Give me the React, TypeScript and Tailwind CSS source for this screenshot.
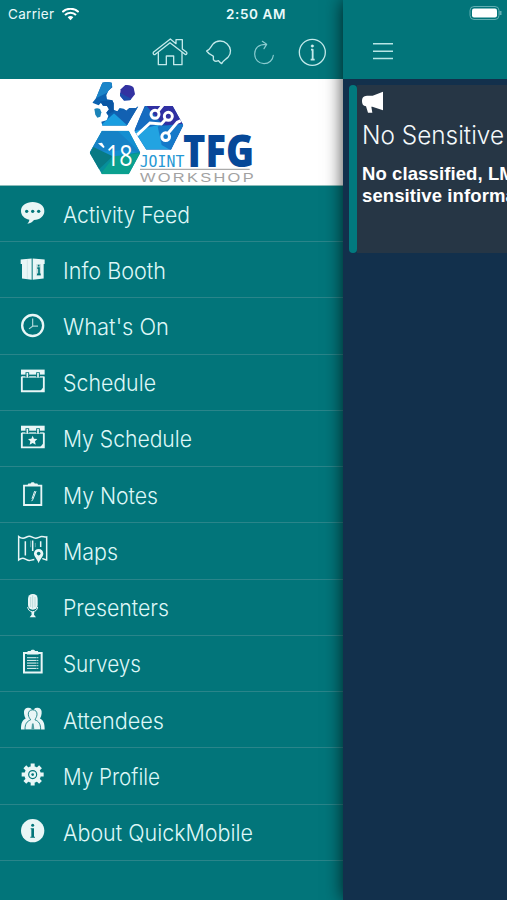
import type { ReactNode } from "react";

type MenuItem = { label: string; width: number; top: number; icon: ReactNode };

const INK = "#e9f6f6";
const TEAL = "#02757a";

const Calendar = ({ y }: { y: number }) => (
  <>
    <path d={`M63 ${y}h71v15h-71z`} fill={INK} />
    <path d={`M65.500 ${y + 21}V${y + 65}H131.500V${y + 21}`} fill="none" stroke={INK} strokeWidth="5.500" />
    <path d={`M66 ${y + 22}h65`} stroke={INK} strokeWidth="4" />
    <path d={`M82 ${y + 8}v15M114 ${y + 8}v15`} stroke={TEAL} strokeWidth="11" />
    <path d={`M82 ${y + 10}v14M114 ${y + 10}v14`} stroke={INK} strokeWidth="5" />
    <path d={`M130 ${y + 53}l-9 11h9z`} fill={INK} />
  </>
);

const items: MenuItem[] = [
  {
    label: "Activity Feed", width: 127, top: 3,
    icon: (
      <>
        <path d="M98 51c20 0 35 11 35 27s-13 26-31 27c-4 6-11 10-20 11 4-4 6-8 6-12-15-3-25-13-25-26 0-16 15-27 35-27z" fill={INK} />
        <g fill={TEAL}><circle cx="80" cy="79" r="5" /><circle cx="98" cy="79" r="5" /><circle cx="116" cy="79" r="5" /></g>
      </>
    ),
  },
  {
    label: "Info Booth", width: 103, top: 171.7,
    icon: (
      <>
        <path d="M62 224l33-3v64l-29-4v-43h-4zM98 221l36 3v14h-3v43l-33 4z" fill={INK} />
        <path d="M82 224v58" stroke="#b9d5d6" strokeWidth="1.500" />
        <path d="M109 238h14v36h-14z" fill="#c5dddd" />
        <path d="M116 240v5M112 250h5v19M111 269h11" stroke={TEAL} strokeWidth="5" fill="none" />
      </>
    ),
  },
  {
    label: "What's On", width: 106, top: 340.4,
    icon: (
      <>
        <circle cx="98" cy="423" r="31.500" fill="none" stroke={INK} strokeWidth="7" />
        <path d="M98 402v23h16M98 425l-11 8" fill="none" stroke="#add7d8" strokeWidth="3.500" />
      </>
    ),
  },
  { label: "Schedule", width: 93, top: -0.8, icon: <Calendar y={46} /> },
  {
    label: "My Schedule", width: 129, top: 167.9,
    icon: (
      <>
        <Calendar y={215} />
        <path d="M98 245l4 9 10 1-7 7 2 10-9-5-9 5 2-10-7-7 10-1z" fill={INK} />
      </>
    ),
  },
  {
    label: "My Notes", width: 95, top: 336.6,
    icon: (
      <>
        <path d="M72 392.500h52v58H72z" fill="none" stroke={INK} strokeWidth="5.500" />
        <path d="M82 392l3-6h7c0-5 12-5 12 0h8l3 6z" fill={INK} />
        <path d="M108 409l-9 24-4 6M104 409l-8 23" stroke={INK} strokeWidth="3" fill="none" />
      </>
    ),
  },
  {
    label: "Maps", width: 55, top: -4.7,
    icon: (
      <>
        <path d="M103 105c-6 0-11 3-15 3-7 0-13-7-20-7-5 0-8 2-12 5V36c4 3 8 5 13 5 7 0 12-6 19-6s11 6 19 6c7 0 12-5 18-5 6 0 10 2 15 1v69c-4 0-9-4-13-3" fill="none" stroke={INK} strokeWidth="4.500" />
        <path d="M76 50v43M98 48v31M122 50v17" stroke={INK} strokeWidth="4.500" />
        <path d="M92 48v20M106 55v13" stroke="#8dc1c3" strokeWidth="2" />
        <path d="M116 73c-8 0-14 6-14 14 0 10 9 15 14 29 5-14 14-19 14-29 0-8-6-14-14-14z" fill={INK} />
        <circle cx="116" cy="87" r="5.500" fill={TEAL} />
      </>
    ),
  },
  {
    label: "Presenters", width: 106, top: 164,
    icon: (
      <>
        <rect x="84" y="209" width="29" height="47" rx="14" fill={INK} />
        <path d="M92 218v30M98 213v39M105 218v30" stroke="#9bc9ca" strokeWidth="1.800" />
        <path d="M83 248c1 9 7 14 15 14s14-5 15-14" fill="none" stroke={INK} strokeWidth="3" />
        <path d="M94 263h9l-1 8 6 8H89l6-8z" fill={INK} />
      </>
    ),
  },
  {
    label: "Surveys", width: 78, top: 332.8,
    icon: (
      <>
        <path d="M72 386.500h53v59H72z" fill="none" stroke={INK} strokeWidth="6" />
        <path d="M81 391l2-10h9c0-5 13-5 13 0h9l2 10z" fill={INK} />
        <path d="M81 401h34M81 409h34M81 417h34M81 425h34M81 433h34" stroke={INK} strokeWidth="3" />
        <path d="M110 397v40" stroke={TEAL} strokeWidth="1.500" />
      </>
    ),
  },
  {
    label: "Attendees", width: 101, top: 6.5,
    icon: (
      <>
        <path d="M83 54c10-1 15 5 14 15-1 7-3 11-6 15l8 5v30H63c0-20 4-27 14-33-3-5-4-9-5-16-1-9 3-15 11-16z" fill={INK} />
        <path d="M114 54c-10-1-15 5-14 15 1 7 3 11 6 15l-8 5v30h36c0-20-4-27-14-33 3-5 4-9 5-16 1-9-3-15-11-16z" fill={INK} />
        <path d="M98 60c9 0 14 6 13 15-1 7-4 10-6 15 12 5 17 12 17 30H75c0-18 5-25 17-30-3-5-6-8-7-15-1-9 4-15 13-15z" fill={INK} stroke={TEAL} strokeWidth="2.500" />
        <path d="M96 101h5l2 19h-9z" fill="#4e9ea1" />
      </>
    ),
  },
  {
    label: "My Profile", width: 97, top: 175.2,
    icon: (
      <>
        <g stroke={INK} strokeWidth="12">
          <path d="M98 222v66M65 255h66M74.500 231.500l47 47M121.500 231.500l-47 47" />
        </g>
        <circle cx="98" cy="255" r="25" fill={INK} />
        <circle cx="98" cy="255" r="12" fill="none" stroke={TEAL} strokeWidth="3.500" />
        <circle cx="98" cy="255" r="4" fill={TEAL} />
      </>
    ),
  },
  {
    label: "About QuickMobile", width: 190, top: 343.9,
    icon: (
      <>
        <circle cx="98" cy="424" r="35" fill={INK} />
        <circle cx="98" cy="408" r="4.500" fill={TEAL} />
        <path d="M92 417h10v25h3v3H91v-3h3v-22h-2z" fill={TEAL} />
      </>
    ),
  },
];

function Logo() {
  return (
    <svg width="185" height="107" viewBox="0 3 555 321" className="ml-20 block">
      <defs>
        <clipPath id="gear">
          <path d="M67 14q14-4 28 0l2 14-12 10-6 14 2 12 16 3 4 9v19l11 5 7-10 12 2 8 6 9-8h20l7-5-35 58H67l-3-12 16-4 5-13-6-10 8-10-6-10-12-1-6-9-7 8-19-8 11-13z" />
        </clipPath>
        <clipPath id="hexRight"><path d="M194 84H278L310 142 273 215H199L163 158z" /></clipPath>
        <clipPath id="hexLeft"><path d="M66 158H146L181 224 146 289H66L29 224z" /></clipPath>
      </defs>
      <g clipPath="url(#gear)">
        <path d="M30 8h150v140H30z" fill="#0b62b0" />
        <path d="M30 8h75L86 42 30 70z" fill="#1b85c9" />
        <path d="M60 70l42-4v34l-24 12z" fill="#0a56a4" />
        <path d="M58 146l46-42 70 44z" fill="#1a9ee0" />
        <path d="M100 104l82-24-36 66z" fill="#1261b2" />
      </g>
      <path d="M43 93q8-5 17 0l4 10-3 13-9 3-6-9z" fill="#1a83b8" />
      <path d="M122 34l14-13q17-2 25 8l4 20-14 17-19 1-12-14z" fill="#3332a1" />
      <path d="M120 44l34 18-4 5-18 1-12-15z" fill="#1c4cab" />
      <g clipPath="url(#hexRight)">
        <path d="M160 80h155v140H160z" fill="#1550ad" />
        <path d="M200 80h110v62l-40 8-65-45z" fill="#3030a2" />
        <path d="M160 150l38-68 48 55-40 70z" fill="#166cc0" />
        <path d="M160 160l75-20 40 75h-95z" fill="#22a3e1" />
        <path d="M233 145l80-8-40 80-28-16z" fill="#1579c9" />
        <g fill="none" stroke="white" strokeWidth="9">
          <path d="M160 181l50-46 34 3 13-14M233 101l16-20M263 167l29-34 30-14" />
          <circle cx="225" cy="109" r="12" /><circle cx="265" cy="115" r="12" /><circle cx="257" cy="176" r="11.500" />
        </g>
      </g>
      <g clipPath="url(#hexLeft)">
        <path d="M25 155h160v140H25z" fill="#078e9b" />
        <path d="M25 155h160v65L105 237 29 221z" fill="#148fd1" />
        <path d="M29 223l37-65 48 2 68 64-45-8z" fill="#1682c6" />
        <path d="M40 207l58 28-55 52-15-60z" fill="#087a84" />
        <path d="M60 290l43-55 80-9-33 70z" fill="#0ba08f" />
      </g>
      <path d="M54 196l12-2 8 13-4 3z" fill="white" />
      <g style={{ fontFamily: "'Open Sans', sans-serif" }}>
        <text x="78" y="264" fontSize="86" fill="white" textLength="80" lengthAdjust="spacingAndGlyphs">18</text>
        <text x="309" y="267" fontSize="131" fontWeight="800" fill="#064898" textLength="213" lengthAdjust="spacingAndGlyphs">TFG</text>
      </g>
      <text x="179" y="268" fontSize="49" fill="#2598d4" textLength="134" lengthAdjust="spacingAndGlyphs" style={{ fontFamily: "'DejaVu Sans Mono', monospace" }}>JOINT</text>
      <path d="M180 274h329" stroke="#aaa" strokeWidth="4" />
      <g transform="translate(180 311) scale(1.2 1)">
        <text x="0" y="0" fontSize="41" fill="#a2a2a2" textLength="284" style={{ fontFamily: "'Liberation Sans', sans-serif" }}>WORKSHOP</text>
      </g>
    </svg>
  );
}

function TopIcons() {
  return (
    <svg width="190" height="36" viewBox="30 108 570 108" className="absolute left-[150px] top-[36px]" fill="none" stroke="#c3e9ea" strokeWidth="4" strokeLinejoin="round" strokeLinecap="round">
      <path d="M91 117L40 157c-2 5 2 8 6 6l44-35 45 35c5 2 7-3 5-6l-13-10v-28h-19v12z" />
      <path d="M55 158v36h24v-26h22v26h25v-36" />
      <path d="M200 153c9-3 12-12 18-20 12-13 31-13 43-2 13 12 14 29 3 41-7 7-14 9-19 19-5-2-7-7-10-9-9 4-17 1-15-9 1-3-1-6-4-7-6-2-11-6-16-13z" />
      <path d="M400 166c-1 14-13 25-28 25-16 0-28-12-28-29 0-17 12-29 34-29M367 124l13 9-8 13" stroke="#8accd0" strokeWidth="3.500" />
      <circle cx="517" cy="157" r="39" />
      <path d="M513 149h5v30M512 179h12" strokeWidth="5.500" strokeLinecap="butt" />
      <circle cx="517" cy="138" r="4" fill="#d4f1f1" strokeWidth="1" />
    </svg>
  );
}

function MenuRow({ item }: { item: MenuItem }) {
  return (
    <li className="flex h-[56.24px] items-center border-b border-[#2a858a] pl-4">
      <svg width="33" height="56.240" viewBox={`48 ${item.top} 99 168.720`} className="shrink-0">{item.icon}</svg>
      <svg width="200" height="56.240" className="ml-[14px] shrink-0 overflow-visible">
        <text x="0" y="37" fill="#def7f7" fontSize="22.800" fontWeight="300" textLength={item.width} lengthAdjust="spacingAndGlyphs" style={{ fontFamily: "Inter, 'Liberation Sans', sans-serif" }}>{item.label}</text>
      </svg>
    </li>
  );
}

export default function App() {
  return (
    <div className="relative flex h-[900px] w-[507px] overflow-hidden bg-[#02757a] font-['Inter','Liberation_Sans',sans-serif]">
      <aside className="w-[343px] shrink-0">
        <header className="h-[79px]"><TopIcons /></header>
        <div className="h-[107px] border-b border-[#8cbdbb] bg-white"><Logo /></div>
        <ul>{items.map((item) => <MenuRow key={item.label} item={item} />)}</ul>
      </aside>

      <main className="relative flex w-[164px] shrink-0 flex-col bg-[#12304c] shadow-[0_0_17px_rgba(0,0,0,0.75)]">
        <header className="h-[79px] bg-[#02757a] pl-[30px] pt-[42px]">
          <svg width="20" height="19" viewBox="0 0 20 19" className="block">
            <path d="M0 1.800h20M0 9.200h20M0 16.500h20" stroke="#b8e5e5" strokeWidth="1.600" />
          </svg>
        </header>
        <section className="ml-[6px] mt-[6px] flex h-[168px]">
          <div className="w-[8px] shrink-0 rounded-sm bg-[#02797e]" />
          <div className="w-[150px] overflow-hidden whitespace-nowrap bg-[#263645] pl-[5px] pt-[6px] text-white">
            <svg width="22" height="22" viewBox="81 48 66 66" fill="white" className="block">
              <path d="M144 50v56l-32-11h-3l3 18H99l-6-19c-9-1-12-7-12-15 0-11 4-16 15-17h17z" />
            </svg>
            <h1 className="mt-[4px] font-['Inter']">
              <svg width="160" height="36" className="block overflow-visible">
                <text x="0" y="27" fill="#f4f9fb" fontSize="25.500" fontWeight="300" textLength="142" lengthAdjust="spacingAndGlyphs">No Sensitive</text>
              </svg>
            </h1>
            <p className="mt-[10px] font-['Liberation_Sans',sans-serif] text-[18.500px] font-bold leading-[22px] tracking-[0.100px]">No classified, LM<br />sensitive informa</p>
          </div>
        </section>
      </main>

      <div className="absolute inset-x-0 top-0 flex h-7 items-center text-[#eafafa]">
        <span className="ml-2 w-[54px] text-[13.500px] tracking-[0.300px]">Carrier</span>
        <svg width="17" height="13" viewBox="0 0 51 39" fill="none" stroke="white" strokeWidth="6">
          <path d="M1 12c14-13 35-13 49 0M9 21c9-9 24-9 33 0" />
          <path d="M17 28c5-5 12-5 17 0l-8.500 9z" fill="white" stroke="none" />
        </svg>
        <span className="ml-[147px] w-[70px] whitespace-nowrap text-[13.500px] font-semibold tracking-[0.600px]">2:50 AM</span>
        <svg width="33" height="16" viewBox="0 0 33 16" className="ml-auto mr-[5px] -mt-[2px]">
          <rect x="1" y="1.500" width="29" height="13" rx="4" fill="none" stroke="#62aeb2" />
          <rect x="3" y="3.500" width="25" height="9" rx="2" fill="white" />
          <path d="M31.500 6v4" stroke="#62aeb2" strokeWidth="2" />
        </svg>
      </div>
    </div>
  );
}
